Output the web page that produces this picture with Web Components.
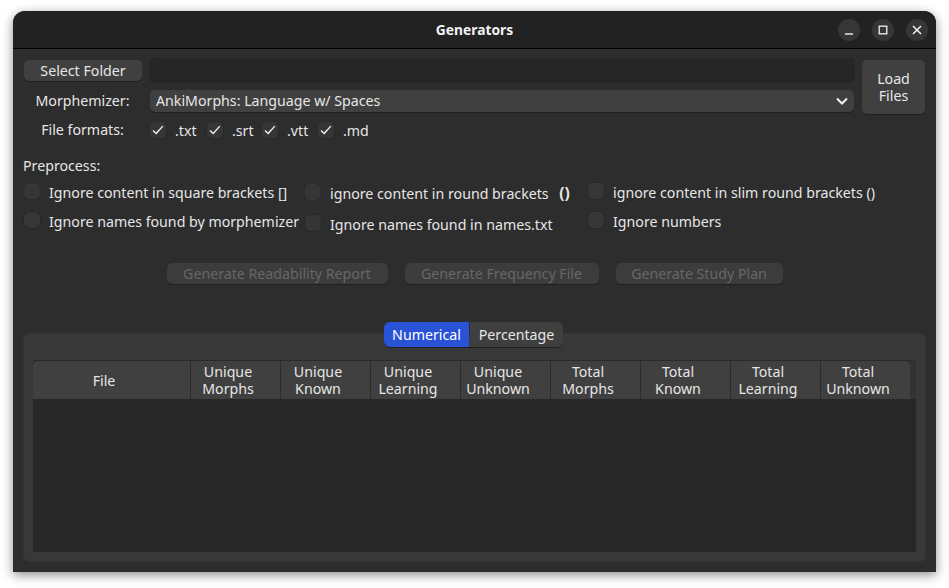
<!DOCTYPE html>
<html>
<head>
<meta charset="utf-8">
<title>Generators</title>
<style>
  html, body { margin: 0; height: 100%; background: #fff; overflow: hidden; }
  body { font: 14.2px/17px "Noto Sans", sans-serif; color: #e6e6e6; padding: 11px 0 0 13px; box-sizing: border-box; }
  .line { display: block; height: 17px; }
</style>
</head>
<body>
<gen-window heading="Generators">
  <gen-source>
    <gen-button slot="folder">Select Folder</gen-button>
    <gen-button slot="load" tall><span class="line">Load</span><span class="line">Files</span></gen-button>
    <gen-check slot="formats" checked>.txt</gen-check>
    <gen-check slot="formats" checked>.srt</gen-check>
    <gen-check slot="formats" checked>.vtt</gen-check>
    <gen-check slot="formats" checked>.md</gen-check>
  </gen-source>

  <gen-preprocess>
    <gen-check slot="first">Ignore content in square brackets []</gen-check>
    <gen-check slot="first">Ignore names found by morphemizer</gen-check>
    <gen-check slot="second" low>ignore content in round brackets <b style="margin-left:7px;font-weight:700;font-size:15.5px">()</b></gen-check>
    <gen-check slot="second" low>Ignore names found in names.txt</gen-check>
    <gen-check slot="third">ignore content in slim round brackets ()</gen-check>
    <gen-check slot="third">Ignore numbers</gen-check>
  </gen-preprocess>

  <gen-actions>
    <gen-button disabled style="width:221px">Generate Readability Report</gen-button>
    <gen-button disabled style="width:194px">Generate Frequency File</gen-button>
    <gen-button disabled style="width:167px">Generate Study Plan</gen-button>
  </gen-actions>

  <gen-tabs>
    <gen-table></gen-table>
  </gen-tabs>
</gen-window>

<script>
class GenWindow extends HTMLElement {
    constructor() {
        super();
        this.shadowDOM = this.attachShadow({mode: 'open'});
    }

    connectedCallback() {
        this.shadowDOM.innerHTML = `
        <style>
          :host {
            display: flex;
            flex-direction: column;
            width: 923px;
            height: 561px;
            background: #2d2d2d;
            border-radius: 12px 12px 0 0;
            box-shadow: 0 3px 11px rgba(0, 0, 0, 0.45);
          }
          header {
            flex: none;
            display: grid;
            grid-template-columns: 1fr auto 1fr;
            align-items: center;
            height: 37px;
            padding: 0 8px;
            background: #222222;
            border-bottom: 1px solid #000;
            border-radius: 12px 12px 0 0;
          }
          h1 {
            grid-column: 2;
            margin: 0;
            font: 700 13.8px/17px "Noto Sans", sans-serif;
            color: #f2f2f2;
          }
          .controls {
            grid-column: 3;
            justify-self: end;
            display: flex;
            gap: 12px;
          }
          .controls span {
            display: flex;
            align-items: center;
            justify-content: center;
            width: 22px;
            height: 22px;
            border-radius: 50%;
            background: #363636;
          }
          main {
            flex: 1;
            display: flex;
            flex-direction: column;
            min-height: 0;
            padding: 9px 11px 11px;
          }
          svg { display: block; fill: none; stroke: #f2f2f2; }
        </style>
        <header>
          <h1>${this.getAttribute('heading')}</h1>
          <div class="controls">
            <span><svg width="12" height="12" viewBox="0 0 12 12" stroke-width="1.4"><path d="M2 10h8"/></svg></span>
            <span><svg width="12" height="12" viewBox="0 0 12 12" stroke-width="1.3"><rect x="2.2" y="2.2" width="7.6" height="7.6"/></svg></span>
            <span><svg width="12" height="12" viewBox="0 0 12 12" stroke-width="1.5"><path d="M2 2l8 8M10 2l-8 8"/></svg></span>
          </div>
        </header>
        <main><slot></slot></main>
        `;
    }
}

class GenButton extends HTMLElement {
    constructor() {
        super();
        this.shadowDOM = this.attachShadow({mode: 'open'});
    }

    connectedCallback() {
        this.shadowDOM.innerHTML = `
        <style>
          :host {
            display: flex;
            align-items: center;
            justify-content: center;
            box-sizing: border-box;
            height: 21px;
            text-align: center;
            background: #404040;
            border-radius: 5px;
            box-shadow: 0 1px 0 #1f1f1f;
            color: #e6e6e6;
          }
          :host([tall]) { height: 54px; border-radius: 5px; }
          :host([disabled]) { background: #3c3c3c; color: #676767; }
        </style>
        <span><slot></slot></span>
        `;
    }
}

class GenCheck extends HTMLElement {
    constructor() {
        super();
        this.shadowDOM = this.attachShadow({mode: 'open'});
    }

    connectedCallback() {
        const tick = this.hasAttribute('checked')
            ? '<svg width="16" height="16" viewBox="0 0 16 16" fill="none" stroke="#f2f2f2" stroke-width="1.4"><path d="M3 8.5l3.2 3 6.6-7.4"/></svg>'
            : '';
        this.shadowDOM.innerHTML = `
        <style>
          :host {
            display: flex;
            align-items: center;
            gap: 9px;
            height: 16px;
            white-space: nowrap;
          }
          .box {
            flex: none;
            width: 16px;
            height: 16px;
            background: #363636;
            border-radius: 5px;
            box-shadow: 0 0 0 1px #292929;
          }
          svg { display: block; }
          .text { display: block; padding-top: 2px; }
          :host([checked]) .text { padding-top: 1px; }
          :host([low]) .text { padding-top: 3px; }
        </style>
        <span class="box">${tick}</span>
        <span class="text"><slot></slot></span>
        `;
    }
}

class GenSource extends HTMLElement {
    constructor() {
        super();
        this.shadowDOM = this.attachShadow({mode: 'open'});
    }

    connectedCallback() {
        this.shadowDOM.innerHTML = `
        <style>
          :host {
            display: grid;
            grid-template-columns: 118px 706px 63px;
            grid-template-rows: 25px 25px 16px;
            column-gap: 7px;
            row-gap: 7px;
            flex: none;
          }
          ::slotted([slot="folder"]) { align-self: start; margin-top: 2px; }
          ::slotted([slot="load"]) { grid-column: 3; grid-row: 1 / span 2; margin-top: 2px; }
          .path { background: #262626; border-radius: 5px; }
          .label { text-align: center; padding-right: 1px; }
          .combo {
            display: flex;
            align-items: center;
            justify-content: space-between;
            box-sizing: border-box;
            height: 22px;
            margin: 0 1px;
            padding: 0 6px 2px;
            background: #404040;
            border-radius: 5px;
            box-shadow: 0 1px 0 #1f1f1f;
          }
          .combo svg { margin-top: 2px; }
          .formats { display: grid; grid-template-columns: 57px 55px 56px auto; margin-left: 1px; }
          .combo-label { align-self: start; margin-top: 2px; }
          .format-label { grid-column: 1; align-self: center; padding-bottom: 2px; }
          svg { display: block; }
        </style>
        <slot name="folder"></slot>
        <div class="path"></div>
        <slot name="load"></slot>
        <div class="label combo-label">Morphemizer:</div>
        <div class="combo">
          <span>AnkiMorphs: Language w/ Spaces</span>
          <svg width="12" height="8" viewBox="0 0 12 8" fill="none" stroke="#f2f2f2" stroke-width="2"><path d="M1 1.5l5 5 5-5"/></svg>
        </div>
        <div class="label format-label">File formats:</div>
        <div class="formats"><slot name="formats"></slot></div>
        `;
    }
}

class GenPreprocess extends HTMLElement {
    constructor() {
        super();
        this.shadowDOM = this.attachShadow({mode: 'open'});
    }

    connectedCallback() {
        this.shadowDOM.innerHTML = `
        <style>
          :host { display: block; flex: none; margin-top: 19px; }
          p { margin: 0 0 9px -1px; }
          .cols { display: flex; }
          .col { display: flex; flex-direction: column; gap: 13px; }
          .a { width: 281px; }
          .b { width: 283px; gap: 15px; padding-top: 1px; }
        </style>
        <p>Preprocess:</p>
        <div class="cols">
          <div class="col a"><slot name="first"></slot></div>
          <div class="col b"><slot name="second"></slot></div>
          <div class="col"><slot name="third"></slot></div>
        </div>
        `;
    }
}

class GenActions extends HTMLElement {
    constructor() {
        super();
        this.shadowDOM = this.attachShadow({mode: 'open'});
    }

    connectedCallback() {
        this.shadowDOM.innerHTML = `
        <style>
          :host {
            display: flex;
            flex: none;
            justify-content: center;
            gap: 17px;
            margin-top: 32px;
          }
        </style>
        <slot></slot>
        `;
    }
}

class GenTabs extends HTMLElement {
    constructor() {
        super();
        this.shadowDOM = this.attachShadow({mode: 'open'});
    }

    connectedCallback() {
        this.shadowDOM.innerHTML = `
        <style>
          :host {
            display: flex;
            flex-direction: column;
            flex: 1;
            min-height: 0;
            margin-top: 38px;
          }
          .tabs {
            display: flex;
            align-self: center;
            position: relative;
            z-index: 1;
            height: 25px;
            margin: 0 2px -13px 0;
            border-radius: 6px;
            box-shadow: 0 1px 0 #1f1f1f;
          }
          .tabs span { display: flex; align-items: center; justify-content: center; }
          .on { width: 85px; background: #2a52d6; color: #fff; border-radius: 6px 0 0 6px; }
          .off { width: 93px; margin-left: 1px; background: #3f3f3f; border-radius: 0 6px 6px 0; }
          .pane {
            flex: 1;
            display: flex;
            min-height: 0;
            padding: 26px 9px 9px 9px;
            background: #383838;
            border-radius: 5px;
            box-shadow: 0 0 0 1px #333333;
          }
        </style>
        <div class="tabs"><span class="on">Numerical</span><span class="off">Percentage</span></div>
        <div class="pane"><slot></slot></div>
        `;
    }
}

class GenTable extends HTMLElement {
    constructor() {
        super();
        this.shadowDOM = this.attachShadow({mode: 'open'});
    }

    connectedCallback() {
        const cols = ['<span class="one">File</span>'];
        ['Unique', 'Total'].forEach((group) => {
            ['Morphs', 'Known', 'Learning', 'Unknown'].forEach((name) => {
                cols.push(`<span class="one">${group}</span><span class="one">${name}</span>`);
            });
        });
        this.shadowDOM.innerHTML = `
        <style>
          :host {
            display: flex;
            flex-direction: column;
            flex: 1;
            background: #272727;
            border-top: 1px solid #2a2a2a;
          }
          .head {
            display: grid;
            grid-template-columns: 158px repeat(7, 90px) 89px;
            flex: none;
            height: 38px;
            background: #323232;
          }
          .head div {
            display: flex;
            flex-direction: column;
            align-items: center;
            justify-content: center;
            box-sizing: border-box;
            padding-right: 15px;
            background: #404040;
            border-right: 1px solid #2b2b2b;
          }
          .one { display: block; height: 17px; white-space: nowrap; }
          .head div:first-child { border-top-left-radius: 5px; }
          .head div:last-child { border-right: 0; border-top-right-radius: 5px; }
        </style>
        <div class="head">${cols.map((c) => `<div>${c}</div>`).join('')}</div>
        `;
    }
}

customElements.define('gen-window', GenWindow);
customElements.define('gen-button', GenButton);
customElements.define('gen-check', GenCheck);
customElements.define('gen-source', GenSource);
customElements.define('gen-preprocess', GenPreprocess);
customElements.define('gen-actions', GenActions);
customElements.define('gen-tabs', GenTabs);
customElements.define('gen-table', GenTable);
</script>
</body>
</html>
